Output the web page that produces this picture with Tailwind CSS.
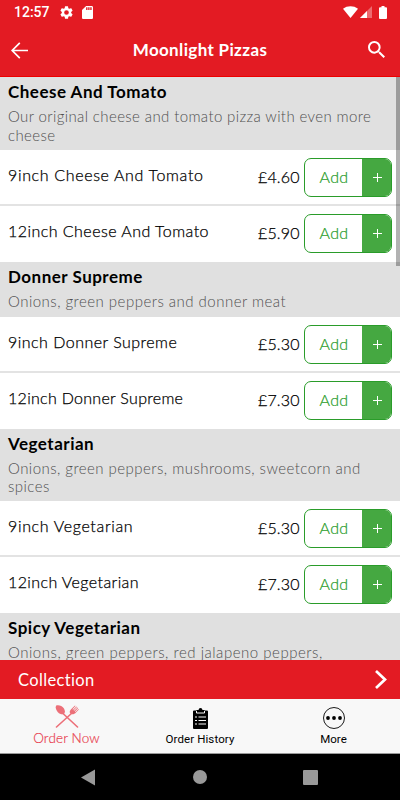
<!DOCTYPE html>
<html lang="en">
<head>
<meta charset="utf-8">
<title>Moonlight Pizzas</title>
<script src="https://cdn.jsdelivr.net/npm/@tailwindcss/browser@4"></script>
</head>
<body class="bg-black">
<div class="relative flex h-[800px] w-[400px] flex-col overflow-hidden bg-white font-['Lato',sans-serif] text-black">
  <header class="h-[77px] shrink-0 border-b border-[#ee0000] bg-[#e31b23] text-white">
    <div class="flex h-6 items-center pl-[14px] pr-[13px]">
      <span class="w-[46px] whitespace-nowrap font-['Roboto',sans-serif] text-[14px] font-medium leading-none">12:57</span>
      <svg class="size-[13px]" viewBox="2 2 20 20" fill="currentColor"><path d="M19.14 12.94c.04-.3.06-.61.06-.94s-.02-.64-.07-.94l2.03-1.58a.49.49 0 0 0 .12-.61l-1.92-3.32a.49.49 0 0 0-.59-.22l-2.39.96a7 7 0 0 0-1.62-.94l-.36-2.54a.48.48 0 0 0-.48-.41h-3.84a.48.48 0 0 0-.47.41l-.36 2.54c-.59.24-1.13.57-1.62.94l-2.39-.96a.48.48 0 0 0-.59.22L2.74 8.87a.48.48 0 0 0 .12.61l2.03 1.58a7 7 0 0 0 0 1.88l-2.03 1.58a.49.49 0 0 0-.12.61l1.92 3.32c.12.22.37.29.59.22l2.39-.96c.5.38 1.03.7 1.62.94l.36 2.54c.05.24.24.41.48.41h3.84c.24 0 .44-.17.47-.41l.36-2.54a7 7 0 0 0 1.62-.94l2.39.96c.22.08.47 0 .59-.22l1.92-3.32a.48.48 0 0 0-.12-.61zM12 15.600a3.600 3.600 0 1 1 0-7.200 3.600 3.600 0 0 1 0 7.200z"/></svg>
      <svg class="ml-[9px] h-[13px] w-[11px]" viewBox="4 2 16 20" preserveAspectRatio="none" fill="currentColor"><path d="M18 2h-8L4 8v12c0 1.100.9 2 2 2h12c1.100 0 2-.9 2-2V4c0-1.100-.9-2-2-2zm-6 6h-2V4h2v4zm3 0h-2V4h2v4zm3 0h-2V4h2v4z"/></svg>
      <svg class="ml-auto h-[12px] w-[15px]" viewBox="0 0 15 12" fill="currentColor"><path d="M0 2.700C4.300-.6 10.700-.6 15 2.700L7.500 12z"/></svg>
      <svg class="ml-[2px] size-[12px]" viewBox="0 0 12 12" fill="currentColor"><path opacity=".35" d="M12 0v12H0z"/><path d="M7 5v7H0z"/></svg>
      <svg class="ml-[7px] h-[13px] w-[8px]" viewBox="0 0 8 13" fill="currentColor"><path d="M2.500 0h3v1.200H7a1 1 0 0 1 1 1V12a1 1 0 0 1-1 1H1a1 1 0 0 1-1-1V2.200a1 1 0 0 1 1-1h1.500z"/></svg>
    </div>
    <div class="flex h-[52px] items-center justify-between pl-[11px] pr-[15px]">
      <svg class="h-[17px] w-[18px]" viewBox="0 0 18 17" fill="none" stroke="currentColor" stroke-width="1.700"><path d="M17 8.500H1.300M8.800.9L1.200 8.500l7.600 7.600"/></svg>
      <h1 class="-mt-[2px] ml-[3px] whitespace-nowrap text-[17px] font-bold leading-none tracking-[0.350px]">Moonlight Pizzas</h1>
      <svg class="-mt-[2px] size-[17px]" viewBox="3 3 17.500 17.500" fill="currentColor"><path d="M15.500 14h-.79l-.28-.27A6.470 6.470 0 0 0 16 9.500 6.500 6.500 0 1 0 9.500 16c1.610 0 3.090-.59 4.230-1.570l.27.28v.79l5 4.990L20.490 19l-4.990-5zm-6 0C7.010 14 5 11.990 5 9.500S7.010 5 9.500 5 14 7.010 14 9.500 11.990 14 9.500 14z"/></svg>
    </div>
  </header>

  <main id="menu" class="relative h-[583px] shrink-0 overflow-hidden"></main>

  <div class="flex h-[39px] shrink-0 items-center justify-between bg-[#e31b23] pl-[18px] pr-[13px] text-white">
    <span class="mt-[2px] text-[16.500px] tracking-[0.350px]">Collection</span>
    <svg class="h-[19px] w-[12px]" viewBox="0 0 12 19" fill="none" stroke="currentColor" stroke-width="2.700"><path d="M1 1l9 8.500L1 18"/></svg>
  </div>

  <nav class="flex h-[55px] shrink-0 border-b border-[#999] bg-[#f8f8f8]">
    <div class="flex w-[133px] flex-col items-center pt-[6px] text-[#e8404f]">
      <svg class="h-[23px] w-[24px]" viewBox="0 0 24 23" fill="#ec6f78"><path d="M8 8.500L22.500 22M17 8L1.500 22" fill="none" stroke="#ec6f78" stroke-width="1.600" stroke-linecap="round"/><path d="M1.200.6C3.600-.5 7 .9 8.800 3.300c1.600 2.300 1.400 4.500 0 5.600-1.600 1-4 .3-5.900-1.700C.9 5 .2 2 1.200.6z"/><path d="M15 8.200c-.8-2 .3-3.300 1.600-4.500L20 .6l.5.5-3 3.200.5.400L21.500 1.500l.5.500-3.300 3.300.5.500L22.700 2.500l.5.500-3.300 3.500.5.400 3-3 .5.500-3.200 3.300c-1.200 1.300-2.700 1.800-4.400 1.300z"/></svg>
      <span class="mt-[2px] whitespace-nowrap text-[13.500px] font-light leading-[17px] tracking-[0.150px] [-webkit-text-stroke:0.200px_#e8404f]">Order Now</span>
    </div>
    <div class="flex w-[134px] flex-col items-center pt-[9px]">
      <svg class="h-[21px] w-[15px]" viewBox="0 0 15 21"><path d="M0 3.500Q0 2.500 1 2.500H3.500V2H5.500Q5.700 0 7.500 0T9.500 2h2v.5H14q1 0 1 1V20q0 1-1 1H1q-1 0-1-1z"/><path d="M3.500 3v2h8V3" fill="none" stroke="#f8f8f8"/><path d="M5.500 9H13M5.500 12.500H13M5.500 16H13M2 9h2M2 12.500h2M2 16h2" stroke="#f8f8f8" stroke-width="1.100"/></svg>
      <span class="mt-[2px] whitespace-nowrap font-['Roboto',sans-serif] text-[11.500px] leading-[16px] tracking-[0.100px]">Order History</span>
    </div>
    <div class="flex w-[133px] flex-col items-center pt-[8px]">
      <svg class="size-[22px]" viewBox="0 0 22 22"><circle cx="11" cy="11" r="10.500" fill="none" stroke="#000" stroke-width=".9"/><circle cx="5" cy="11" r="1.900"/><circle cx="11" cy="11" r="1.900"/><circle cx="17" cy="11" r="1.900"/></svg>
      <span class="mt-[2px] font-['Roboto',sans-serif] text-[11.500px] leading-[16px]">More</span>
    </div>
  </nav>

  <div class="flex h-[46px] shrink-0 items-center bg-black pl-[81px]">
    <svg class="h-[17px] w-[14px]" viewBox="0 0 14 17"><path d="M14 .5v16L0 8.500z" fill="#999"/></svg>
    <div class="ml-[98px] size-[14px] rounded-full bg-[#999]"></div>
    <div class="ml-[96px] size-[15px] rounded-[1px] bg-[#999]"></div>
  </div>
</div>

<script>
const sections = [
  { name: 'Cheese And Tomato', desc: ['Our original cheese and tomato pizza with even more', 'cheese'], box: 'h-[73px]', spacing: 'tracking-[0.380px]', large: 'tracking-[0.460px]', prices: ['£4.60', '£5.90'] },
  { name: 'Donner Supreme', desc: ['Onions, green peppers and donner meat'], box: 'h-[55.500px]', spacing: 'tracking-[0.480px]', large: 'tracking-[0.300px]', prices: ['£5.30', '£7.30'] },
  { name: 'Vegetarian', desc: ['Onions, green peppers, mushrooms, sweetcorn and', 'spices'], box: 'h-[72.500px]', spacing: 'tracking-[0.460px]', large: 'tracking-[0.400px]', prices: ['£5.30', '£7.30'] },
  { name: 'Spicy Vegetarian', desc: ['Onions, green peppers, red jalapeno peppers,'], box: 'h-[73px]', spacing: 'tracking-[0.520px]', large: '', prices: [] }
];
const row = (s, price, i) => `
  <div class="flex ${i ? 'h-[55.500px] pb-[1px]' : 'h-[56px] border-b-2 border-[#e3e3e3]'} items-center pl-2 pr-2">
    <span class="-mt-[4px] whitespace-nowrap text-[16px] font-light ${i ? s.large : s.name === 'Donner Supreme' ? 'tracking-[0.480px]' : 'tracking-[0.650px]'} [-webkit-text-stroke:0.250px_#000]">${i ? '12inch' : '9inch'} ${s.name}</span>
    <span class="ml-auto w-[46px] text-[16px] font-light tracking-[0.150px] [-webkit-text-stroke:0.250px_#000]">${price}</span>
    <div class="flex h-[39px] w-[88px] overflow-hidden rounded-[7px] border border-[#2a9c2a]">
      <span class="flex flex-1 items-center justify-center pl-px text-[16px] font-light tracking-[0.300px] text-[#1f9a26] [-webkit-text-stroke:0.200px_#1f9a26]">Add</span>
      <span class="flex w-[29px] items-center justify-center bg-[#45a841] pl-px text-white"><svg class="size-[9px]" viewBox="0 0 9 9" stroke="currentColor"><path d="M4.500 0v9M0 4.500h9"/></svg></span>
    </div>
  </div>`;
document.getElementById('menu').innerHTML = sections.map(s => `
  <section>
    <div class="${s.box} bg-[#e0e0e0] pl-2 pt-[5px]">
      <h2 class="whitespace-nowrap text-[17px] font-bold leading-[20px] tracking-[0.500px]">${s.name}</h2>
      <p class="mt-[5px] whitespace-nowrap text-[15px] font-light leading-[18.500px] ${s.spacing} text-[#505050]">${s.desc.join('<br>')}</p>
    </div>
    ${s.prices.map((p, i) => row(s, p, i)).join('')}
  </section>`).join('') + '<div class="absolute right-0 top-0 h-[189px] w-1 bg-black/30"></div>';
</script>
</body>
</html>
